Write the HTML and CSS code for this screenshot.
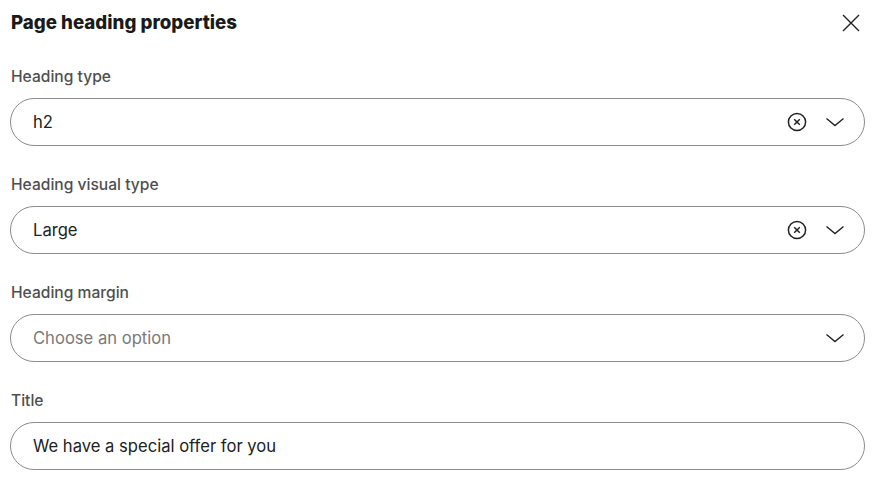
FILE: index.html
```html
<!DOCTYPE html>
<html lang="en">
<head>
<meta charset="utf-8">
<title>Page heading properties</title>
<link rel="stylesheet" href="styles.css">
</head>
<body>
<div class="panel">
  <header class="panel-header">
    <h1 class="panel-title">Page heading properties</h1>
    <button class="close-btn" aria-label="Close">
      <svg width="18" height="18" viewBox="0 0 18 18"><path d="M1 1L17 17M17 1L1 17" stroke="#222" stroke-width="1.4" fill="none"/></svg>
    </button>
  </header>

  <div class="field">
    <label class="field-label">Heading type</label>
    <div class="control">
      <span class="value">h2</span>
      <span class="icons">
        <svg class="clear" width="20" height="20" viewBox="0 0 20 20"><circle cx="10" cy="10" r="8.6" stroke="#222" stroke-width="1.5" fill="none"/><path d="M7.2 7.2L12.8 12.8M12.8 7.2L7.2 12.8" stroke="#222" stroke-width="1.5"/></svg>
        <svg class="chev" width="20" height="12" viewBox="0 0 20 12"><path d="M1.5 2.5L10 9.5L18.5 2.5" stroke="#222" stroke-width="1.4" fill="none"/></svg>
      </span>
    </div>
  </div>

  <div class="field">
    <label class="field-label">Heading visual type</label>
    <div class="control">
      <span class="value">Large</span>
      <span class="icons">
        <svg class="clear" width="20" height="20" viewBox="0 0 20 20"><circle cx="10" cy="10" r="8.6" stroke="#222" stroke-width="1.5" fill="none"/><path d="M7.2 7.2L12.8 12.8M12.8 7.2L7.2 12.8" stroke="#222" stroke-width="1.5"/></svg>
        <svg class="chev" width="20" height="12" viewBox="0 0 20 12"><path d="M1.5 2.5L10 9.5L18.5 2.5" stroke="#222" stroke-width="1.4" fill="none"/></svg>
      </span>
    </div>
  </div>

  <div class="field">
    <label class="field-label">Heading margin</label>
    <div class="control">
      <span class="value placeholder">Choose an option</span>
      <span class="icons">
        <svg class="chev" width="20" height="12" viewBox="0 0 20 12"><path d="M1.5 2.5L10 9.5L18.5 2.5" stroke="#222" stroke-width="1.4" fill="none"/></svg>
      </span>
    </div>
  </div>

  <div class="field">
    <label class="field-label">Title</label>
    <div class="control">
      <span class="value">We have a special offer for you</span>
    </div>
  </div>
</div>
</body>
</html>
```

FILE: styles.css
```css
* { box-sizing: border-box; }
html, body { margin: 0; padding: 0; background: #fff; }
body { font-family: "Inter", "Noto Sans", sans-serif; color: #222; }

.panel {
  width: 865px;
  padding: 0 0 0 10px;
}

.panel-header {
  display: flex;
  align-items: center;
  justify-content: space-between;
  height: 45px;
  padding-left: 1px;
}

.panel-title {
  margin: 0;
  font-family: "Inter", sans-serif;
  font-weight: 800;
  font-size: 18.7px;
  color: #1a1a1a;
  letter-spacing: 0;
}

.close-btn {
  border: 0;
  background: none;
  padding: 0;
  width: 18px;
  height: 18px;
  margin-right: 5px;
  margin-top: 0;
  display: flex;
}

.field {
  display: flex;
  flex-direction: column;
  margin-top: 29px;
}
.panel-header + .field { margin-top: 22px; }

.field-label {
  font-family: "Inter", sans-serif;
  font-weight: 500;
  font-size: 15.6px;
  color: #4f4f4f;
  padding-left: 1px;
  line-height: 20px;
  margin-bottom: 11px;
}

.control {
  height: 48px;
  border: 1px solid #8c8c8c;
  border-radius: 24px;
  display: flex;
  align-items: center;
  padding: 0 19px 0 22px;
}

.value {
  flex: 1;
  font-size: 16.6px;
  color: #222;
}
.value.placeholder { color: #7a7a7a; }

.icons {
  display: flex;
  align-items: center;
  gap: 18px;
}
.icons .clear { display: block; }
.icons .chev { display: block; }
```
